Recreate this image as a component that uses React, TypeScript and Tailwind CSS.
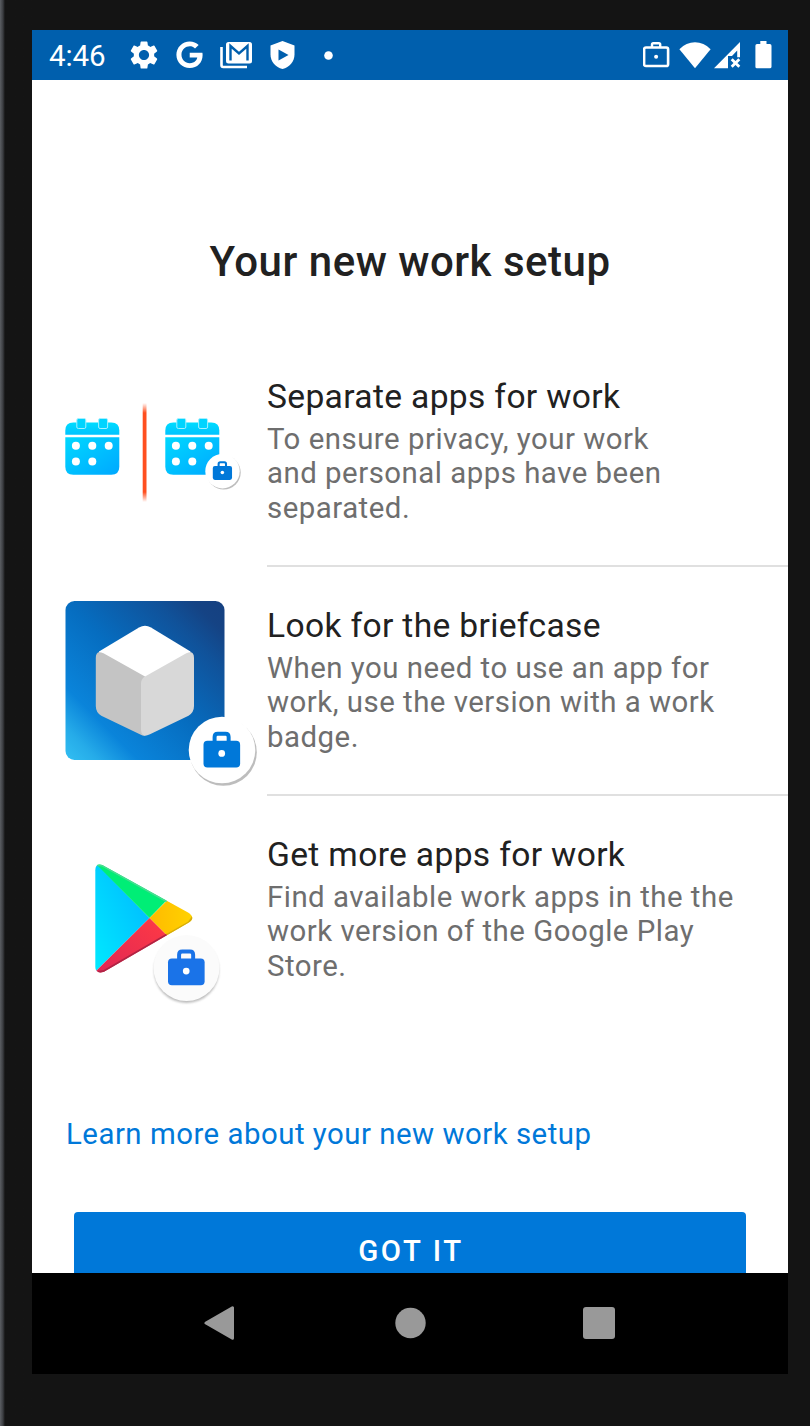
import React from 'react';
import { FaGoogle } from 'react-icons/fa';
import { MdSettings } from 'react-icons/md';

function StatusBar() {
  return (
    <header className="flex h-[50px] shrink-0 items-center bg-[#005fad] pl-[17px] pr-[16px] text-white">
      <span className="w-[78px] whitespace-nowrap pt-0.5 text-[29.5px] leading-[50px] tracking-[-0.1px]">4:46</span>
      <MdSettings className="h-[34px] w-[34px]" />
      <FaGoogle className="ml-[15px] h-[27.500px] w-[27px]" />
      <svg className="ml-[17px] h-7 w-8" viewBox="0 0 32 28">
        <path d="M1.500 6v18.300q0 1.700 1.700 1.700H27" fill="none" stroke="currentColor" strokeWidth="2.600" />
        <rect x="6" y="1" width="26" height="21.500" rx="2.500" fill="currentColor" />
        <path d="M10.500 19.500V5l8.500 7.500L27.500 5v14.500" fill="none" stroke="#005fad" strokeWidth="2.400" />
      </svg>
      <svg className="ml-[18px] h-7 w-[25px]" viewBox="0 0 25 28">
        <path d="M12.500 0 24.500 4.500v9c0 7-5 12.800-12 14.500C5.500 26.300.5 20.500.5 13.500v-9z" fill="currentColor" />
        <path d="M8.500 8.500v11l10-5.500z" fill="#005fad" />
      </svg>
      <svg className="ml-[29px] h-[9px] w-[9px]" viewBox="0 0 9 9">
        <circle cx="4.500" cy="4.500" r="4.300" fill="currentColor" />
      </svg>
      <div className="ml-auto flex items-center">
        <svg className="h-7 w-[27px]" viewBox="0 0 27 28">
          <rect x="1.100" y="6.500" width="24" height="18.500" rx="1.800" fill="none" stroke="currentColor" strokeWidth="2.600" />
          <path d="M9 6V3.600q0-1.300 1.300-1.300h5.600q1.300 0 1.300 1.300V6" fill="none" stroke="currentColor" strokeWidth="2.400" />
          <circle cx="13.100" cy="15.700" r="2" fill="currentColor" />
        </svg>
        <svg className="ml-[9px] h-7 w-8" viewBox="0 0 32 28">
          <path d="M16 27.300.4 8.200Q7.200 1.300 16 1.300T31.600 8.200z" fill="currentColor" />
        </svg>
        <svg className="ml-[3px] h-7 w-[27px]" viewBox="0 0 27 28">
          <path d="M0 27.300 26 1v15.300h-2.800V9.500L18 15h-4V27.300z" fill="currentColor" />
          <path d="m17.700 18.200 7.600 7.600m0-7.600-7.600 7.600" fill="none" stroke="currentColor" strokeWidth="2.800" />
        </svg>
        <svg className="ml-[14px] h-7 w-[17px]" viewBox="0 0 17 28">
          <path d="M5.300 0h6.200v3h3.300q1.700 0 1.700 1.700v21q0 1.600-1.700 1.600H2q-1.600 0-1.600-1.600v-21Q.4 3 2 3h3.300z" fill="currentColor" />
        </svg>
      </div>
    </header>
  );
}

function Briefcase({ x, y, s, color }: { x: number; y: number; s: number; color: string }) {
  return (
    <g transform={`translate(${x} ${y}) scale(${s})`}>
      <rect x="0" y="9" width="37" height="27" rx="4" fill={color} />
      <path d="M11.200 10V5.200q0-3.200 3.200-3.200h7.800q3.200 0 3.200 3.200V10" fill="none" stroke={color} strokeWidth="4" />
      <circle cx="18.400" cy="21.800" r="3.400" fill="#fff" />
    </g>
  );
}

function Calendar({ x }: { x: number }) {
  return (
    <g transform={`translate(${x} 0)`}>
      <path d="M0 96.700V92.500q0-8 8-8h38q8 0 8 8v4.200z" fill="url(#calTop)" />
      <path d="M0 99.200h54v29.500q0 8-8 8H8q-8 0-8-8z" fill="url(#calBody)" />
      <rect x="11.500" y="80.500" width="9" height="10" rx="1.500" fill="#00d4ff" stroke="#a5f0ff" strokeWidth="1" />
      <rect x="33.300" y="80.500" width="9" height="10" rx="1.500" fill="#00d4ff" stroke="#a5f0ff" strokeWidth="1" />
      <g fill="#fff">
        <circle cx="10.600" cy="107.800" r="4" />
        <circle cx="27" cy="107.800" r="4" />
        <circle cx="43.400" cy="107.800" r="4" />
        <circle cx="10.600" cy="123.500" r="4" />
        <circle cx="27" cy="123.500" r="4" />
      </g>
    </g>
  );
}

function SeparateArt() {
  return (
    <svg className="h-full w-full" viewBox="0 0 235 229">
      <defs>
        <linearGradient id="calTop" x1="0" y1="0" x2="0" y2="1">
          <stop offset="0" stopColor="#00dcff" />
          <stop offset="1" stopColor="#00c3ff" />
        </linearGradient>
        <linearGradient id="calBody" x1="0" y1="0" x2="1" y2="1">
          <stop offset="0" stopColor="#00d8ff" />
          <stop offset="1" stopColor="#00a8ff" />
        </linearGradient>
        <linearGradient id="barFade" x1="0" y1="0" x2="0" y2="1">
          <stop offset="0" stopColor="#ff4f1f" stopOpacity="0" />
          <stop offset=".1" stopColor="#ff4f1f" />
          <stop offset=".9" stopColor="#ff4f1f" />
          <stop offset="1" stopColor="#ff4f1f" stopOpacity="0" />
        </linearGradient>
      </defs>
      <Calendar x={33.300} />
      <Calendar x={133.300} />
      <rect x="110.700" y="65" width="3.800" height="99" fill="url(#barFade)" />
      <circle cx="191.700" cy="134.500" r="17" fill="#bdbdbd" />
      <circle cx="190.500" cy="133.200" r="17.200" fill="#fff" />
      <Briefcase x={180.800} y={123.200} s={0.520} color="#0078d9" />
    </svg>
  );
}

function BriefcaseArt() {
  return (
    <svg className="h-full w-full" viewBox="0 0 235 229">
      <defs>
        <linearGradient id="tile" x1="0" y1="1" x2="1" y2="0">
          <stop offset="0" stopColor="#32bff2" />
          <stop offset=".1" stopColor="#26ace9" />
          <stop offset=".23" stopColor="#0a84da" />
          <stop offset=".5" stopColor="#066dc0" />
          <stop offset=".78" stopColor="#10529a" />
          <stop offset=".9" stopColor="#154384" />
          <stop offset="1" stopColor="#154080" />
        </linearGradient>
      </defs>
      <rect x="33.500" y="34" width="159" height="159" rx="9" fill="url(#tile)" />
      <path d="M67 84.500 107 60.500q6-3.400 12 0L158.500 84.500V90L113 116 66 90z" fill="#fff" />
      <path d="M113 109.500 71.500 86.300Q63.800 82.800 63.800 91v48q0 6.500 5.500 9.700l38.500 18.500q2.700 1.500 5.200 1.500z" fill="#c4c4c4" />
      <path d="M113 109.500 154.300 86.300Q162 82.800 162 91v48q0 6.500-5.500 9.700l-38.500 18.500q-9 4.500-9-5V116.500q0-4.700 4-7z" fill="#d8d8d8" />
      <circle cx="191.300" cy="185.300" r="33.500" fill="#bdbdbd" />
      <circle cx="190" cy="183" r="33.300" fill="#fff" />
      <Briefcase x={171.500} y={164.800} s={0.990} color="#0078d9" />
    </svg>
  );
}

function PlayArt() {
  return (
    <svg className="h-full w-full" viewBox="0 0 235 229">
      <defs>
        <linearGradient id="playBlue" x1="1" y1="0" x2="0" y2="1">
          <stop offset="0" stopColor="#00b4ff" />
          <stop offset="1" stopColor="#00eaff" />
        </linearGradient>
        <linearGradient id="playYellow" x1="0" y1="0" x2="1" y2="0">
          <stop offset="0" stopColor="#ffba00" />
          <stop offset="1" stopColor="#ffd800" />
        </linearGradient>
        <linearGradient id="playRed" x1="1" y1="0" x2="0" y2="1">
          <stop offset="0" stopColor="#ff3a44" />
          <stop offset="1" stopColor="#de2556" />
        </linearGradient>
        <clipPath id="playShape">
          <path d="M63.300 73.500q0-7.500 7-5.500L156 115.500q8.500 5.500 0 10.500L72 174.800q-8.700 2.500-8.700-5z" />
        </clipPath>
        <filter id="soft" x="-30%" y="-30%" width="160%" height="160%">
          <feGaussianBlur stdDeviation="1.200" />
        </filter>
      </defs>
      <g transform="translate(0 1)">
        <g clipPath="url(#playShape)">
          <path d="M63 65v110l54.500-54z" fill="url(#playBlue)" />
          <path d="M64 67 117.500 121 135 103 72 60z" fill="#00ee76" />
          <path d="M117.500 121 135 103.500 170 121 135 138.500z" fill="url(#playYellow)" />
          <path d="M117.500 121 135 138.500 72 182 64 174z" fill="url(#playRed)" />
          <path d="M65 67.500 70.300 68 135 104" fill="none" stroke="#49dc91" strokeWidth="3" />
          <path d="M66 175.500 72 174.500 135 138" fill="none" stroke="#af2444" strokeWidth="3" />
          <path d="M135 138 157 125.500 161 120" fill="none" stroke="#d4ac0b" strokeWidth="2.500" />
        </g>
        <circle cx="154.500" cy="173.500" r="32.500" fill="#999" opacity=".65" filter="url(#soft)" />
        <circle cx="154.500" cy="171" r="33" fill="#fbfbfb" />
        <Briefcase x={136} y={152.500} s={0.990} color="#1a73e8" />
      </g>
    </svg>
  );
}

const rows = [
  {
    title: 'Separate apps for work',
    lines: ['To ensure privacy, your work', 'and personal apps have been', 'separated.'],
    art: <SeparateArt />,
  },
  {
    title: 'Look for the briefcase',
    lines: ['When you need to use an app for', 'work, use the version with a work', 'badge.'],
    art: <BriefcaseArt />,
  },
  {
    title: 'Get more apps for work',
    lines: ['Find available work apps in the the', 'work version of the Google Play', 'Store.'],
    art: <PlayArt />,
  },
];

export default function App() {
  return (
    <div className="flex h-[1426px] w-[810px] overflow-hidden bg-[#141414] font-['Roboto',sans-serif]">
      <div className="w-8 shrink-0 bg-linear-to-r from-[#5c5f64] from-[0px] via-[#3a3c40] via-[3px] to-[#141414] to-[5px]" />
      <div className="mt-[30px] flex h-[1344px] w-[756px] shrink-0 flex-col bg-white">
        <StatusBar />
        <main className="flex min-h-0 flex-1 flex-col overflow-hidden">
          <h1 className="mt-[157px] text-center text-[42px] font-medium leading-[50px] tracking-[0.5px] text-[#212121]">
            Your new work setup
          </h1>
          <ul className="mt-[51px] shrink-0">
            {rows.map((row, i) => (
              <li key={row.title} className="flex h-[229px]">
                <div className="w-[235px] shrink-0">{row.art}</div>
                <div className={i < 2 ? 'flex-1 border-b-2 border-[#e0e0e0] pt-[39px]' : 'flex-1 pt-[39px]'}>
                  <h2 className="whitespace-nowrap text-[33.6px] leading-[40px] tracking-[0.34px] text-[#212121]">{row.title}</h2>
                  <p className="mt-[5px] whitespace-nowrap text-[29.4px] leading-[34.4px] tracking-[0.5px] text-[#6e6e6e]">
                    {row.lines.map((line) => (
                      <span key={line} className="block">{line}</span>
                    ))}
                  </p>
                </div>
              </li>
            ))}
          </ul>
          <a className="ml-[34px] mt-[92px] whitespace-nowrap text-[29.4px] leading-[34px] tracking-[0.5px] text-[#0078d9]">
            Learn more about your new work setup
          </a>
          <button className="mx-[42px] mt-[61px] h-[76px] shrink-0 rounded bg-[#0078d9] pl-[2px] pt-[2px] text-[29.4px] font-medium tracking-[2.600px] text-white">
            GOT IT
          </button>
        </main>
        <nav className="flex h-[101px] shrink-0 items-center justify-between bg-black pb-px pl-[172px] pr-[173px] text-[#999]">
          <svg className="h-[34px] w-8" viewBox="0 0 32 34">
            <path d="M2 17 28.500 1.800v30.400z" fill="currentColor" stroke="currentColor" strokeWidth="3" strokeLinejoin="round" />
          </svg>
          <svg className="h-8 w-8" viewBox="0 0 32 32">
            <circle cx="16.500" cy="16" r="15.200" fill="currentColor" />
          </svg>
          <svg className="h-8 w-8" viewBox="0 0 32 32">
            <rect width="32" height="32" rx="3" fill="currentColor" />
          </svg>
        </nav>
      </div>
    </div>
  );
}
